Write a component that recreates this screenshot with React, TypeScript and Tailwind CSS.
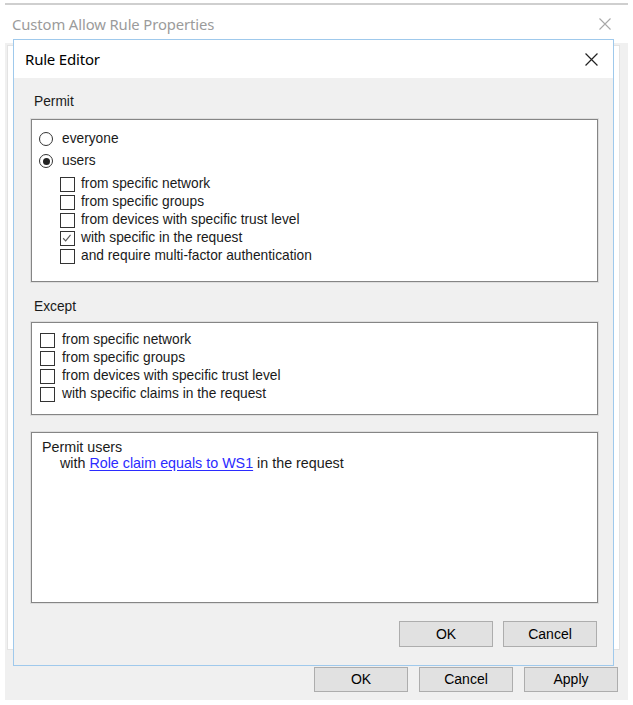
import React from 'react'

const Check = ({ checked = false }: { checked?: boolean }) => (
    <span className="relative w-[15px] h-[15px] shrink-0 bg-white border border-[#333333]">
        {checked && (
            <svg viewBox="0 0 15 15" className="absolute inset-0 w-[13px] h-[13px]">
                <path d="M2.5 7.2 L5.4 10.2 L11 3.2" fill="none" stroke="#5a5a5a" strokeWidth="1.3" />
            </svg>
        )}
    </span>
)

const Radio = ({ checked = false }: { checked?: boolean }) => (
    <span className="w-[14px] h-[14px] shrink-0 rounded-full bg-white border border-[#333333] flex items-center justify-center">
        {checked && <span className="w-[7px] h-[7px] rounded-full bg-[#222222]" />}
    </span>
)

const CheckRow = ({ label, checked, gap }: { label: string; checked?: boolean; gap: string }) => (
    <div className={`h-[18px] flex items-center ${gap}`}>
        <Check checked={checked} />
        <span className="leading-none">{label}</span>
    </div>
)

const WinButton = ({ label, size }: { label: string; size: string }) => (
    <button className={`${size} bg-[#e1e1e1] border border-[#adadad] text-[14px] text-black flex items-center justify-center`}>
        {label}
    </button>
)

const CloseX = ({ color, size }: { color: string; size: number }) => (
    <svg width={size} height={size} viewBox="0 0 12 12">
        <path d="M0.5 0.5 L11.5 11.5 M11.5 0.5 L0.5 11.5" stroke={color} strokeWidth="1.1" />
    </svg>
)

export default function App() {
    const boxCls = 'bg-white border border-[#858585] shadow-[0_0_0_1px_#dedede]'

    return (
        <div className="relative w-[633px] h-[705px] bg-white overflow-hidden font-['Liberation_Sans',Arial,sans-serif] text-[13.75px] text-[#1a1a1a]">
            {/* cut-off window above */}
            <div className="mx-[5px] mt-[3px] h-[2px] bg-[#cfcfcf]" />

            {/* outer window title */}
            <div className="h-[38px] flex items-center justify-between pl-[12px] pr-[22px]">
                <span className="font-['Noto_Sans',sans-serif] text-[14.8px] text-[#9b9b9b] tracking-[-0.1px]">
                    Custom Allow Rule Properties
                </span>
                <CloseX color="#a8a8a8" size={12} />
            </div>

            {/* outer window body */}
            <div className="mx-[5px] h-[657px] bg-[#f0f0f0] flex flex-col">
                <div className="ml-[2px] mr-[8px] mt-[2px] h-[605px] bg-white border border-[#e3e3e3]" />
                <div className="flex justify-end gap-[11px] pr-[10px] mt-[17px]">
                    <WinButton label="OK" size="w-[94px] h-[25px]" />
                    <WinButton label="Cancel" size="w-[94px] h-[25px]" />
                    <WinButton label="Apply" size="w-[94px] h-[25px]" />
                </div>
            </div>

            {/* Rule Editor dialog, floating over the properties window */}
            <div className="absolute left-[13px] top-[39px] w-[601px] h-[627px] border border-[#9fc9ec] bg-[#f0f0f0] flex flex-col">
                <div className="h-[38px] bg-white flex items-center justify-between pl-[11px] pr-[15px]">
                    <span className="font-['Noto_Sans',sans-serif] text-[15px] text-black tracking-[-0.2px]">Rule Editor</span>
                    <CloseX color="#222222" size={13} />
                </div>

                <div className="flex-1 flex flex-col pl-[17px] pr-[15px]">
                    <div className="mt-[16px] h-[16px] leading-[16px] pl-[3px]">Permit</div>
                    <div className={`mt-[9px] h-[163px] ${boxCls} pt-[8px] pl-[7px]`}>
                        <div className="h-[22px] flex items-center gap-[9px]">
                            <Radio />
                            <span className="leading-none">everyone</span>
                        </div>
                        <div className="h-[22px] flex items-center gap-[9px]">
                            <Radio checked />
                            <span className="leading-none">users</span>
                        </div>
                        <div className="mt-[3px] pl-[21px]">
                            <CheckRow gap="gap-[6px]" label="from specific network" />
                            <CheckRow gap="gap-[6px]" label="from specific groups" />
                            <CheckRow gap="gap-[6px]" label="from devices with specific trust level" />
                            <CheckRow gap="gap-[6px]" label="with specific in the request" checked />
                            <CheckRow gap="gap-[6px]" label="and require multi-factor authentication" />
                        </div>
                    </div>

                    <div className="mt-[17px] h-[16px] leading-[16px] pl-[3px]">Except</div>
                    <div className={`mt-[7px] h-[93px] ${boxCls} pt-[8px] pl-[8px]`}>
                        <CheckRow gap="gap-[7px]" label="from specific network" />
                        <CheckRow gap="gap-[7px]" label="from specific groups" />
                        <CheckRow gap="gap-[7px]" label="from devices with specific trust level" />
                        <CheckRow gap="gap-[7px]" label="with specific claims in the request" />
                    </div>

                    <div className={`mt-[17px] h-[171px] ${boxCls} pt-[6px] pl-[10px] text-[14.3px] leading-[16px]`}>
                        <div>Permit users</div>
                        <div className="pl-[18px]">
                            with{' '}
                            <span className="text-[#2b2bff] underline underline-offset-2">Role claim equals to WS1</span>{' '}
                            in the request
                        </div>
                    </div>

                    <div className="mt-[18px] flex justify-end gap-[10px] pr-[1px]">
                        <WinButton label="OK" size="w-[94px] h-[26px]" />
                        <WinButton label="Cancel" size="w-[94px] h-[26px]" />
                    </div>
                </div>
            </div>
        </div>
    )
}
